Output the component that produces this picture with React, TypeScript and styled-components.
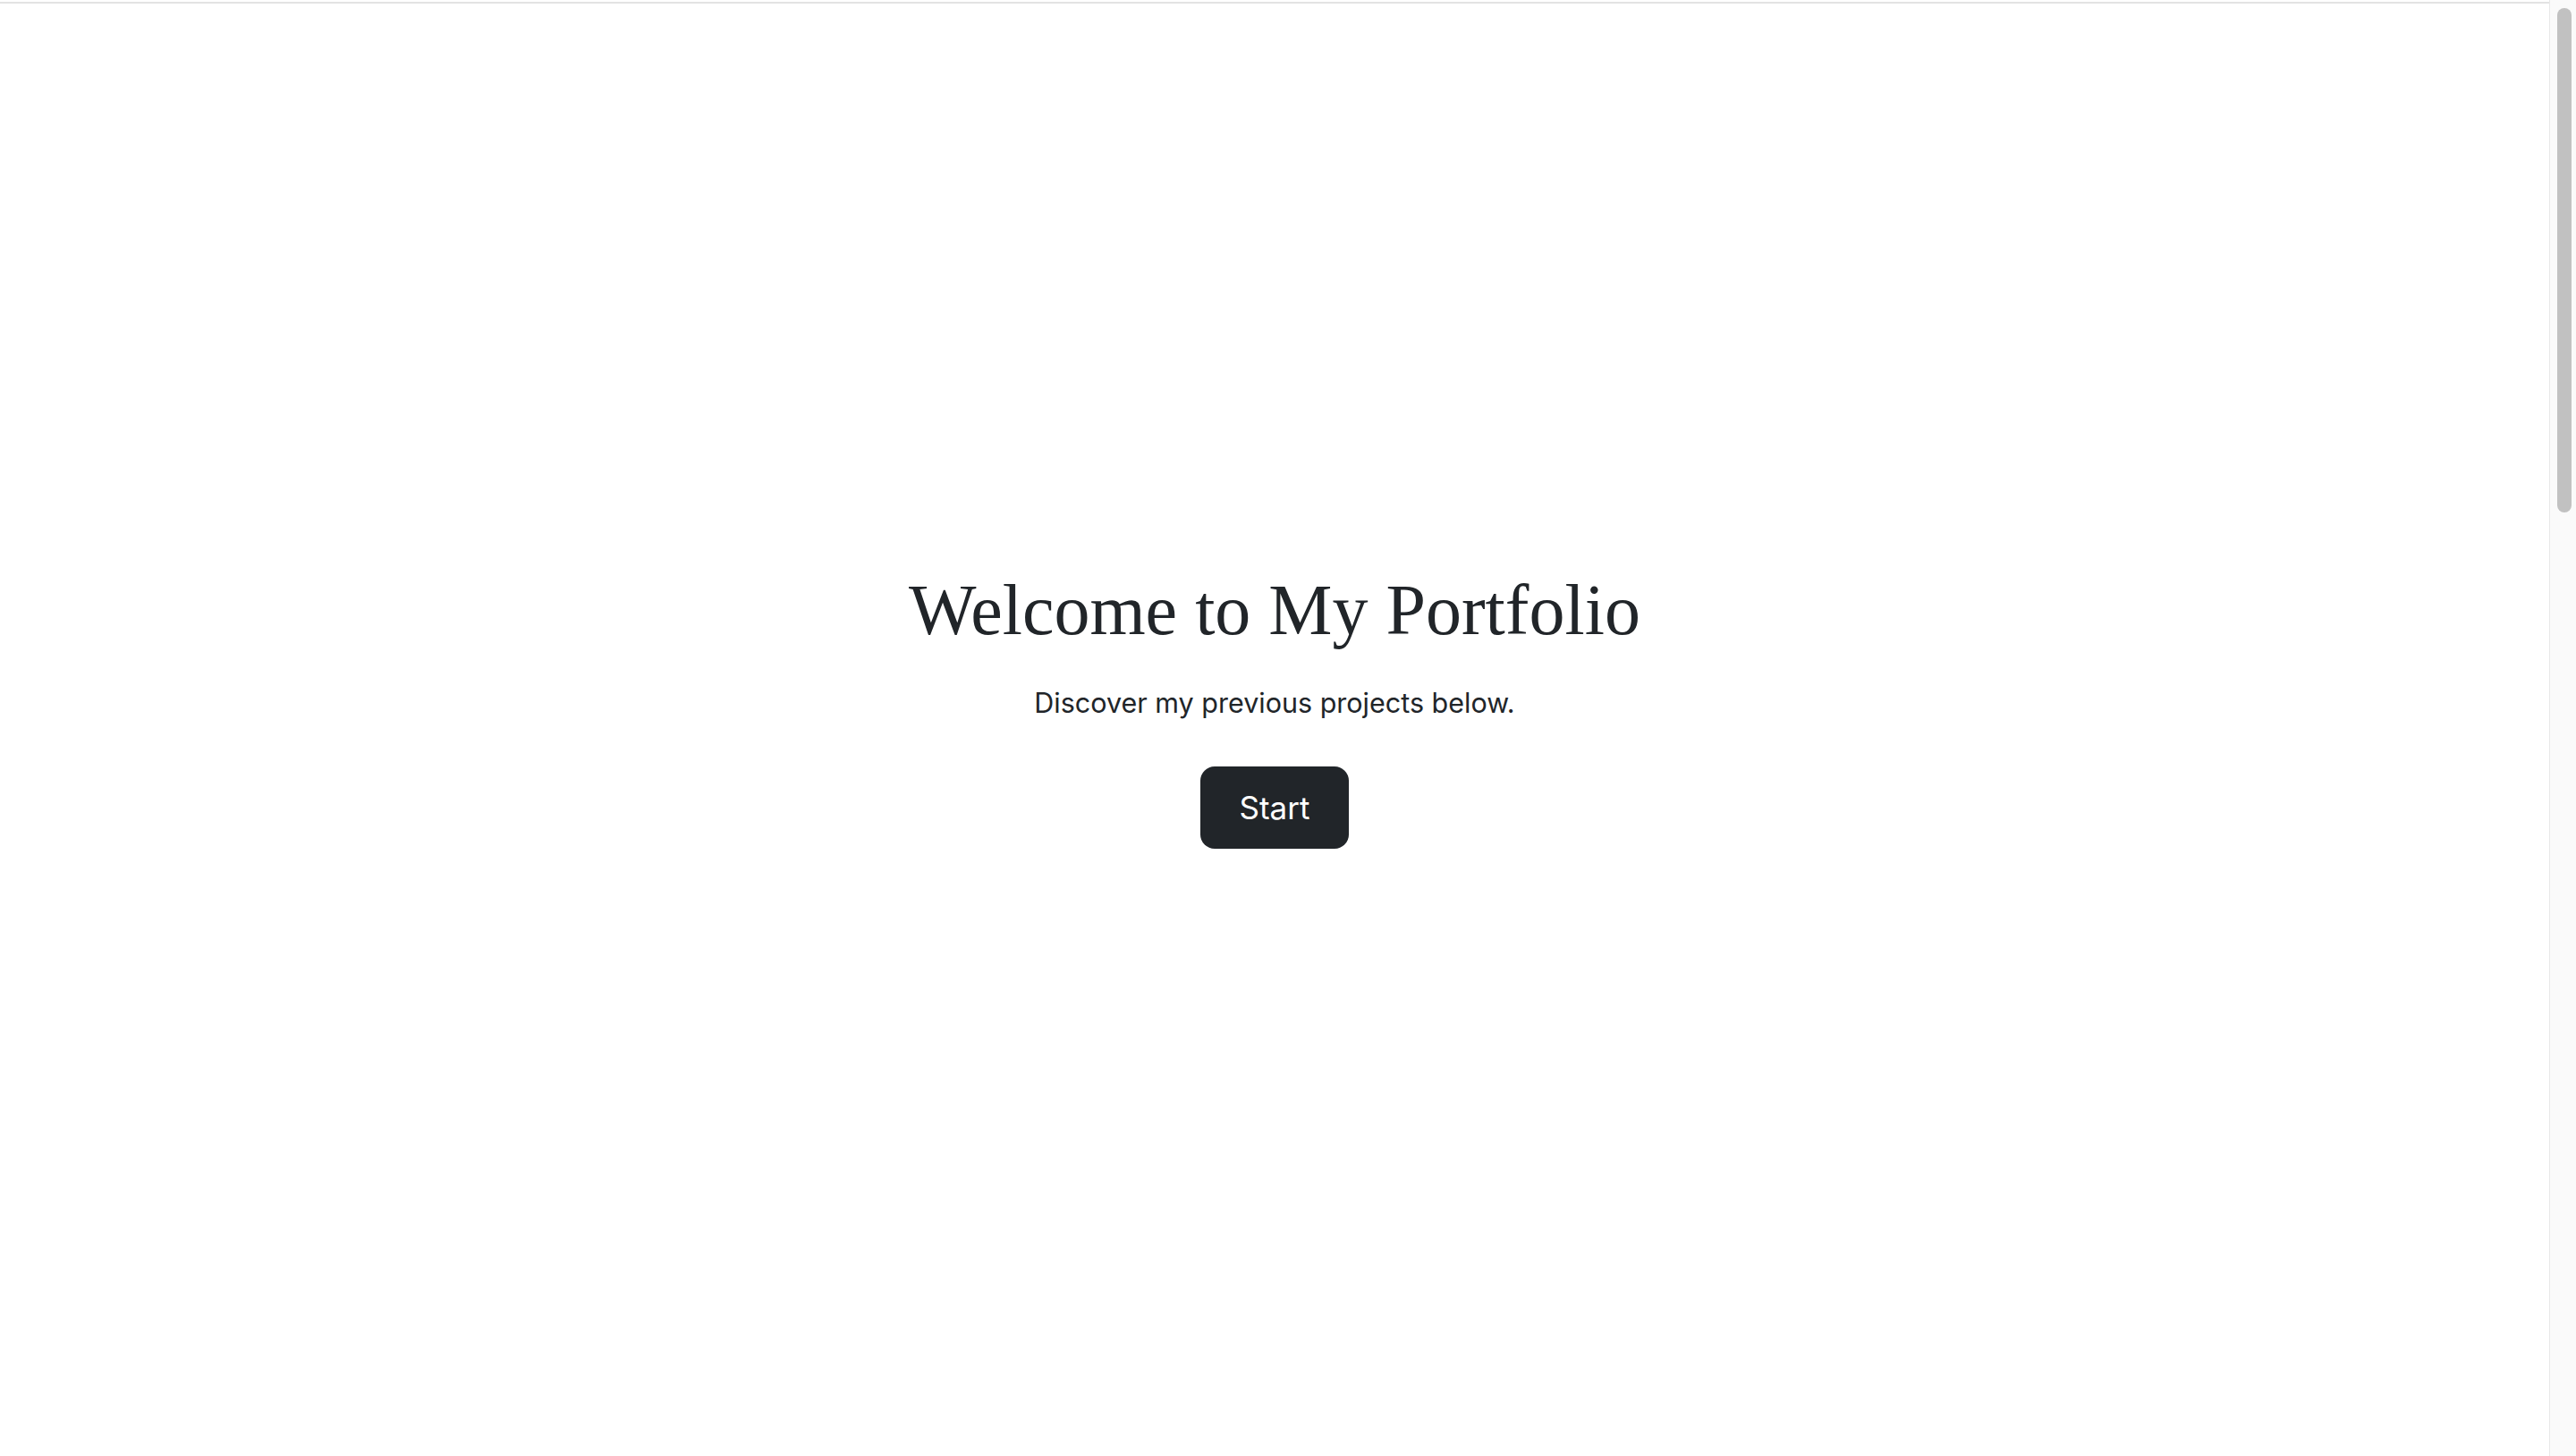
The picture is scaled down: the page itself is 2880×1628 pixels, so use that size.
import React from "react";
import styled, { createGlobalStyle } from "styled-components";

const GlobalStyle = createGlobalStyle`
  html, body {
    margin: 0;
    padding: 0;
    background: #ffffff;
    overflow: hidden;
  }
  body {
    font-family: Inter, "Liberation Sans", sans-serif;
    color: #212529;
  }
`;

const Page = styled.div`
  margin-top: 2px;
  border-top: 2px solid #e3e3e3;
  padding-right: 30px;
  height: calc(100vh - 4px);
  box-sizing: border-box;
`;

const Hero = styled.section`
  display: flex;
  flex-direction: column;
  align-items: center;
  padding-top: 630px;
`;

const Title = styled.h1`
  margin: 0;
  font-family: "Liberation Serif", "Times New Roman", serif;
  font-weight: 400;
  font-size: 80px;
  line-height: 96px;
  color: #212529;
`;

const Lead = styled.p`
  margin: 32px 0 0;
  font-family: Inter, "Liberation Sans", sans-serif;
  font-size: 30.5px;
  line-height: 48px;
  color: #212529;
`;

const StartButton = styled.button`
  margin-top: 47px;
  width: 166px;
  height: 92px;
  border: none;
  border-radius: 16px;
  background: #212529;
  color: #ffffff;
  font-family: Inter, "Liberation Sans", sans-serif;
  font-size: 35px;
  cursor: pointer;
`;

const ScrollRail = styled.div`
  position: fixed;
  top: 0;
  right: 0;
  bottom: 0;
  width: 30px;
  box-sizing: border-box;
  background: #fafafa;
  border-left: 1px solid #e8e8e8;
  padding: 9px 5px 0 8px;
`;

const ScrollThumb = styled.div`
  height: 564px;
  border-radius: 9px;
  background: #c1c1c1;
`;

export default function App() {
  return (
    <>
      <GlobalStyle />
      <Page>
        <Hero>
          <Title>Welcome to My Portfolio</Title>
          <Lead>Discover my previous projects below.</Lead>
          <StartButton>Start</StartButton>
        </Hero>
      </Page>
      <ScrollRail aria-hidden="true">
        <ScrollThumb />
      </ScrollRail>
    </>
  );
}
